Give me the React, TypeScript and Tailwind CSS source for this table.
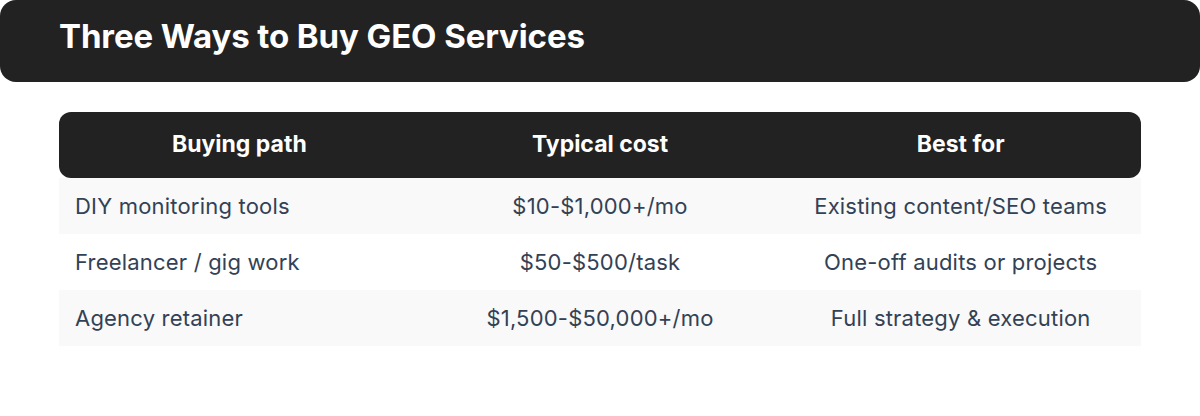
const ROWS = [
  ["DIY monitoring tools", "$10-$1,000+/mo", "Existing content/SEO teams"],
  ["Freelancer / gig work", "$50-$500/task", "One-off audits or projects"],
  ["Agency retainer", "$1,500-$50,000+/mo", "Full strategy & execution"],
];

export default function App() {
  return (
    <div className="w-[1200px] h-[416px] bg-white font-['Inter','Liberation_Sans',sans-serif]">
      <div className="h-[82px] bg-[#222222] rounded-[16px] flex items-center pl-[59px] pb-[9px]">
        <h1 className="text-[33px] font-bold text-white tracking-[-0.1px]">Three Ways to Buy GEO Services</h1>
      </div>

      <div className="mx-[59px] mt-[30px]">
        <div className="grid grid-cols-3 h-[66px] bg-[#222222] rounded-[12px] items-center text-white text-[23px] font-bold pb-[1px]">
          <div className="text-center">Buying path</div>
          <div className="text-center">Typical cost</div>
          <div className="text-center">Best for</div>
        </div>
        {ROWS.map((r, i) => (
          <div
            key={i}
            className={`grid grid-cols-3 h-[56px] items-center text-[22px] tracking-[0.2px] text-[#334155] pt-[1px] ${i % 2 === 0 ? "bg-[#f9f9f9]" : "bg-white"}`}
          >
            <div className="pl-[16px]">{r[0]}</div>
            <div className="text-center">{r[1]}</div>
            <div className="text-center">{r[2]}</div>
          </div>
        ))}
      </div>
    </div>
  );
}
